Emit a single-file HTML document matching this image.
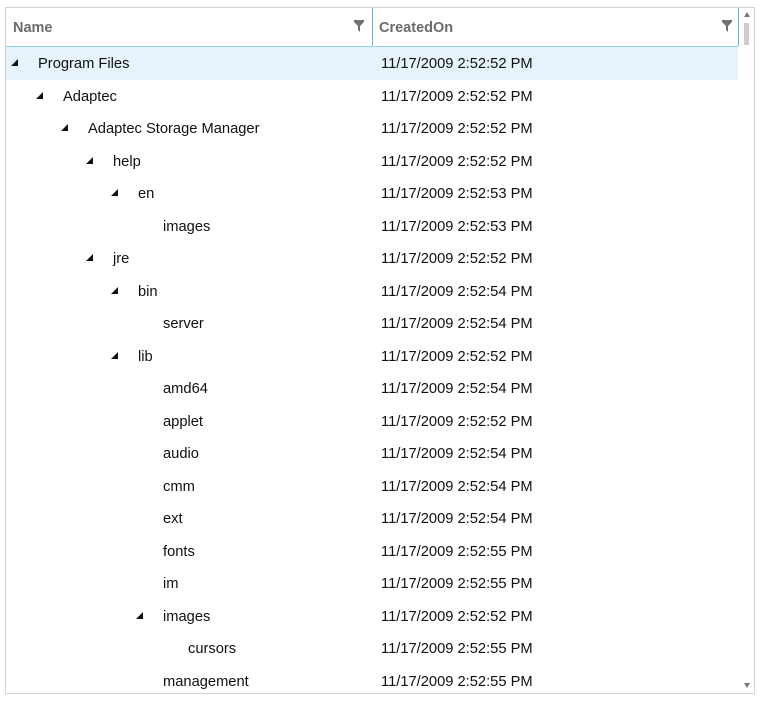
<!DOCTYPE html>
<html><head><style>
body{margin:0;width:761px;height:701px;background:#fff;font-family:"Liberation Sans",sans-serif;overflow:hidden;position:relative}
.box{position:absolute;left:5px;top:7px;width:748px;height:685px;border:1px solid #d4d4d4}
.hdr{position:absolute;top:8px;height:38px;border-bottom:2px solid #8fd0f0;font-weight:bold;color:#6b6b6b;font-size:14.5px;line-height:40px}
.filt{position:absolute;top:12px}
.row{position:absolute;left:6px;width:732px;height:32.5px;font-size:14.7px;color:#111}
.row span{position:absolute;top:9px}
.tri{position:absolute;top:12px;width:0;height:0;border-left:7px solid transparent;border-bottom:7px solid #111}
.d{left:375px}
</style></head><body>
<div class="box"></div>
<div class="hdr" style="left:6px;width:366px"><span style="position:absolute;left:7px">Name</span>
<svg class="filt" style="left:348px" width="10" height="12"><path d="M0 0H10V2L6 6V12L4 10V6L0 2Z" fill="#707070"/></svg></div>
<div style="position:absolute;left:372px;top:8px;width:1px;height:38px;background:#5cb8e6"></div>
<div class="hdr" style="left:373px;width:365px"><span style="position:absolute;left:6px">CreatedOn</span>
<svg class="filt" style="left:349px" width="10" height="12"><path d="M0 0H10V2L6 6V12L4 10V6L0 2Z" fill="#707070"/></svg></div>
<div style="position:absolute;left:738px;top:8px;width:1px;height:38px;background:#5cb8e6"></div>
<div style="position:absolute;left:744px;top:12px;width:0;height:0;border-left:3px solid transparent;border-right:3px solid transparent;border-bottom:5px solid #777"></div>
<div style="position:absolute;left:744px;top:23px;width:5px;height:22px;background:#cdcdcd"></div>
<div style="position:absolute;left:744px;top:683px;width:0;height:0;border-left:3px solid transparent;border-right:3px solid transparent;border-top:5px solid #777"></div>
<div id="rows"></div>
<script>
var d=[["Program Files",0,1,"52"],["Adaptec",1,1,"52"],["Adaptec Storage Manager",2,1,"52"],["help",3,1,"52"],["en",4,1,"53"],["images",5,0,"53"],["jre",3,1,"52"],["bin",4,1,"54"],["server",5,0,"54"],["lib",4,1,"52"],["amd64",5,0,"54"],["applet",5,0,"52"],["audio",5,0,"54"],["cmm",5,0,"54"],["ext",5,0,"54"],["fonts",5,0,"55"],["im",5,0,"55"],["images",5,1,"52"],["cursors",6,0,"55"],["management",5,0,"55"]];
var h="";d.forEach(function(r,i){var y=47+i*32.5;h+='<div class="row" style="top:'+y+'px;'+(i==0?'background:#e6f3fb':'')+'">'+(r[2]?'<div class="tri" style="left:'+(5+r[1]*25)+'px"></div>':'')+'<span style="left:'+(32+r[1]*25)+'px">'+r[0]+'</span><span class="d">11/17/2009 2:52:'+r[3]+' PM</span></div>'});
document.getElementById("rows").innerHTML=h;
</script>
</body></html>
